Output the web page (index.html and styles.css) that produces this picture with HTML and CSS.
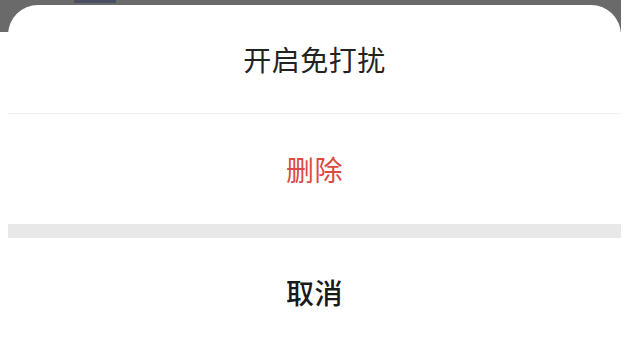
FILE: index.html
```html
<!DOCTYPE html>
<html lang="zh-CN">
<head>
<meta charset="utf-8">
<link rel="stylesheet" href="styles.css">
</head>
<body>
<div class="screen">
  <div class="peek"></div>
  <div class="sheet">
    <div class="action">开启免打扰</div>
    <div class="divider"></div>
    <div class="action danger">删除</div>
    <div class="gap"></div>
    <div class="action cancel">取消</div>
  </div>
</div>
</body>
</html>
```
FILE: styles.css
```css
html, body {
  margin: 0;
  padding: 0;
  background: #ffffff;
  overflow: hidden;
}
.screen {
  width: 621px;
  height: 340px;
  padding: 5px 0 0 8px;
  box-sizing: border-box;
  background: linear-gradient(#6a6a6a 0 32px, #ffffff 32px);
  position: relative;
  font-family: "Noto Sans CJK SC", "Noto Sans", sans-serif;
}
.peek {
  position: absolute;
  left: 74px;
  top: 0;
  width: 42px;
  height: 3px;
  background: #3d4463;
  filter: blur(0.6px);
  opacity: 0.7;
}
.sheet {
  background: #ffffff;
  border-radius: 30px 30px 0 0;
  display: flex;
  flex-direction: column;
  position: relative;
}
.action {
  height: 108px;
  display: flex;
  align-items: center;
  justify-content: center;
  font-size: 28px;
  color: #222222;
  letter-spacing: 0.5px;
}
.divider {
  height: 1px;
  background: #f1f1f1;
}
.danger {
  height: 110px;
  color: #dc4a42;
}
.gap {
  height: 14px;
  background: #e8e8e8;
}
.cancel {
  font-weight: 500;
  color: #1a1a1a;
}
```
